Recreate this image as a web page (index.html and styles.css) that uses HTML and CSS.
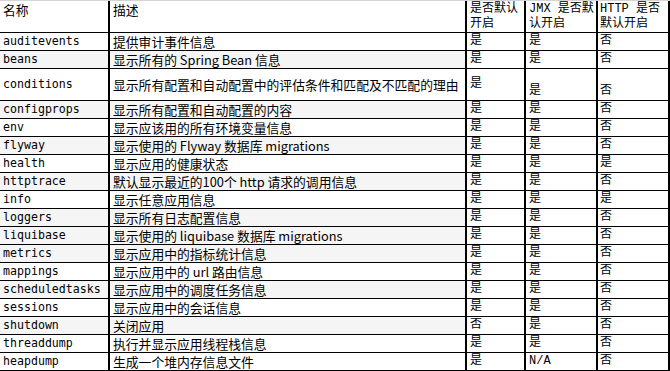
FILE: index.html
```html
<!DOCTYPE html>
<html lang="zh-CN">
<head>
<meta charset="utf-8">
<title>Endpoints</title>
<link rel="stylesheet" href="styles.css">
</head>
<body>
<table class="grid">
  <colgroup>
    <col class="c-name"><col class="c-desc"><col class="c-def"><col class="c-jmx"><col class="c-http">
  </colgroup>
  <thead>
    <tr class="head">
      <th class="name">名称</th>
      <th class="desc">描述</th>
      <th class="flag">是否默认<br>开启</th>
      <th class="flag">JMX 是否默<br>认开启</th>
      <th class="flag">HTTP 是否<br>默认开启</th>
    </tr>
  </thead>
  <tbody>
    <tr><td class="name">auditevents</td><td class="desc">提供审计事件信息</td><td class="flag">是</td><td class="flag">是</td><td class="flag">否</td></tr>
    <tr class="alt"><td class="name">beans</td><td class="desc">显示所有的 Spring Bean 信息</td><td class="flag">是</td><td class="flag">是</td><td class="flag">否</td></tr>
    <tr class="tall"><td class="name">conditions</td><td class="desc">显示所有配置和自动配置中的评估条件和匹配及不匹配的理由</td><td class="flag">是</td><td class="flag low">是</td><td class="flag low">否</td></tr>
    <tr class="alt"><td class="name">configprops</td><td class="desc">显示所有配置和自动配置的内容</td><td class="flag">是</td><td class="flag">是</td><td class="flag">否</td></tr>
    <tr><td class="name">env</td><td class="desc">显示应该用的所有环境变量信息</td><td class="flag">是</td><td class="flag">是</td><td class="flag">否</td></tr>
    <tr class="alt"><td class="name">flyway</td><td class="desc">显示使用的 Flyway 数据库 migrations</td><td class="flag">是</td><td class="flag">是</td><td class="flag">否</td></tr>
    <tr><td class="name">health</td><td class="desc">显示应用的健康状态</td><td class="flag">是</td><td class="flag">是</td><td class="flag">是</td></tr>
    <tr class="alt"><td class="name">httptrace</td><td class="desc">默认显示最近的100个 http 请求的调用信息</td><td class="flag">是</td><td class="flag">是</td><td class="flag">否</td></tr>
    <tr><td class="name">info</td><td class="desc">显示任意应用信息</td><td class="flag">是</td><td class="flag">是</td><td class="flag">是</td></tr>
    <tr class="alt"><td class="name">loggers</td><td class="desc">显示所有日志配置信息</td><td class="flag">是</td><td class="flag">是</td><td class="flag">否</td></tr>
    <tr class="alt"><td class="name">liquibase</td><td class="desc">显示使用的 liquibase 数据库 migrations</td><td class="flag">是</td><td class="flag">是</td><td class="flag">否</td></tr>
    <tr class="alt"><td class="name">metrics</td><td class="desc">显示应用中的指标统计信息</td><td class="flag">是</td><td class="flag">是</td><td class="flag">否</td></tr>
    <tr><td class="name">mappings</td><td class="desc">显示应用中的 url 路由信息</td><td class="flag">是</td><td class="flag">是</td><td class="flag">否</td></tr>
    <tr class="alt"><td class="name">scheduledtasks</td><td class="desc">显示应用中的调度任务信息</td><td class="flag">是</td><td class="flag">是</td><td class="flag">否</td></tr>
    <tr><td class="name">sessions</td><td class="desc">显示应用中的会话信息</td><td class="flag">是</td><td class="flag">是</td><td class="flag">否</td></tr>
    <tr class="alt"><td class="name">shutdown</td><td class="desc">关闭应用</td><td class="flag">否</td><td class="flag">是</td><td class="flag">否</td></tr>
    <tr><td class="name">threaddump</td><td class="desc">执行并显示应用线程栈信息</td><td class="flag">是</td><td class="flag">是</td><td class="flag">否</td></tr>
    <tr><td class="name">heapdump</td><td class="desc">生成一个堆内存信息文件</td><td class="flag">是</td><td class="flag na">N/A</td><td class="flag">否</td></tr>
  </tbody>
</table>
</body>
</html>
```

FILE: styles.css
```css
html, body {
  margin: 0;
  padding: 0;
  background: #ffffff;
}

.grid {
  border-collapse: separate;
  border-spacing: 0;
  table-layout: fixed;
  width: 670px;
  border-top: 1px solid #d4d4d4;
  color: #000;
}

.c-name { width: 110px; }
.c-desc { width: 357px; }
.c-def { width: 59px; }
.c-jmx { width: 72px; }
.c-http { width: 72px; }

.grid th,
.grid td {
  border-right: 2px solid #000;
  border-bottom: 1px solid #000;
  padding: 0 0 0 3px;
  height: 17px;
  line-height: 17px;
  vertical-align: middle;
  text-align: left;
  font-weight: normal;
  white-space: nowrap;
  box-sizing: content-box;
}

.grid .head th {
  height: 30px;
  padding-top: 1px;
  line-height: 15px;
  vertical-align: top;
}

.grid .tall td {
  height: 31px;
}

.grid .tall td.low {
  vertical-align: bottom;
}

.name {
  font-family: "DejaVu Sans Mono", "Noto Sans CJK SC", monospace;
  font-size: 11.6px;
}

.head .name,
.desc {
  font-family: "Noto Sans CJK SC", "Noto Sans", sans-serif;
  font-size: 12.8px;
}

.flag {
  font-family: "Liberation Mono", "Noto Sans CJK SC", monospace;
  font-size: 12px;
}

.grid td.flag:last-child,
.grid th.flag:last-child {
  padding-left: 2px;
}

.alt .name,
.alt .desc {
  background: #f5f5f5;
}
```
